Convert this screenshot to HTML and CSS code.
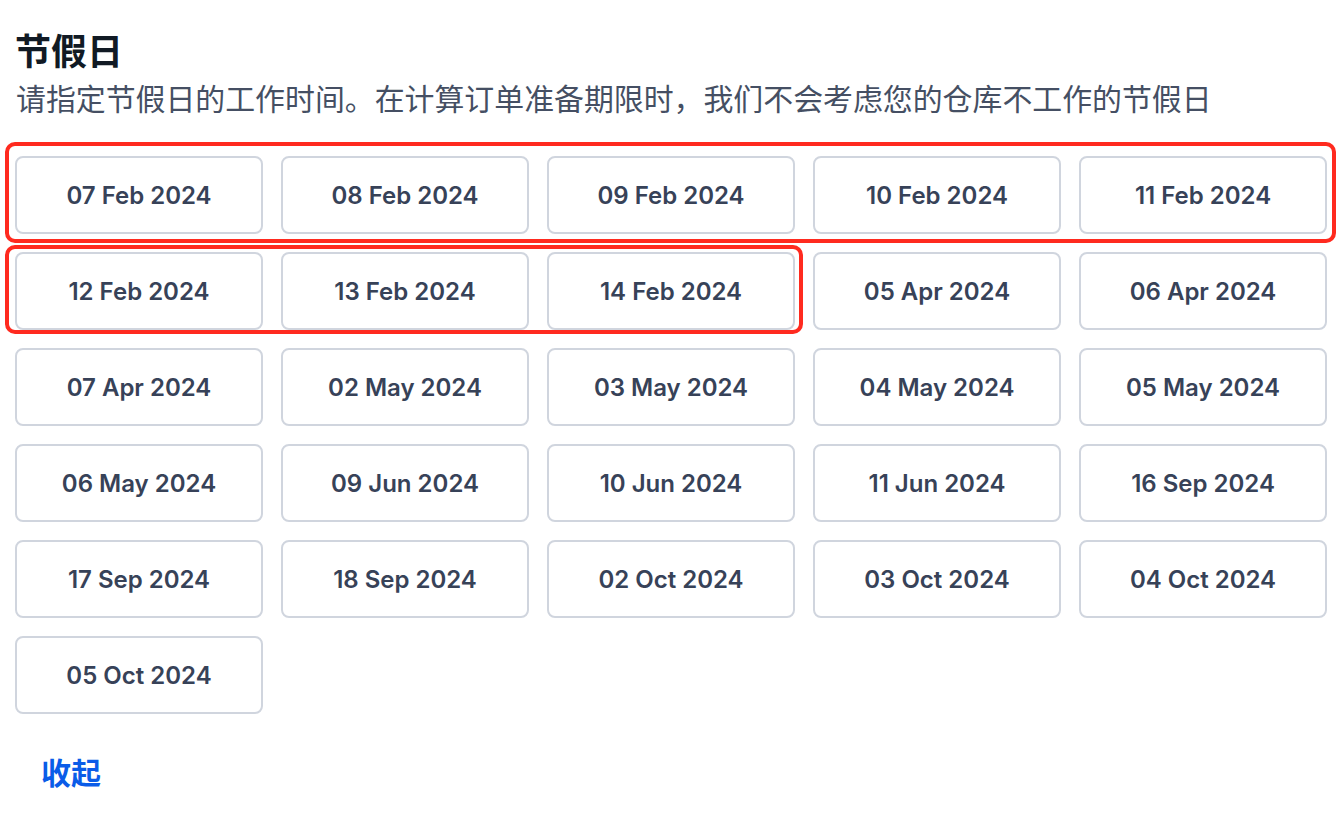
FILE: index.html
```html
<!DOCTYPE html>
<html lang="zh">
<head>
    <meta charset="UTF-8">
    <meta name="viewport" content="width=device-width, initial-scale=1.0">
    <title>节假日</title>
    <link rel="stylesheet" href="styles.css">
</head>
<body>
    <div class="holidays">
        <h1 class="holidays-title">节假日</h1>
        <p class="holidays-subtitle">请指定节假日的工作时间。在计算订单准备期限时，我们不会考虑您的仓库不工作的节假日</p>

        <div class="holiday-grid">
            <button class="holiday-button">07 Feb 2024</button>
            <button class="holiday-button">08 Feb 2024</button>
            <button class="holiday-button">09 Feb 2024</button>
            <button class="holiday-button">10 Feb 2024</button>
            <button class="holiday-button">11 Feb 2024</button>
            <button class="holiday-button">12 Feb 2024</button>
            <button class="holiday-button">13 Feb 2024</button>
            <button class="holiday-button">14 Feb 2024</button>
            <button class="holiday-button">05 Apr 2024</button>
            <button class="holiday-button">06 Apr 2024</button>
            <button class="holiday-button">07 Apr 2024</button>
            <button class="holiday-button">02 May 2024</button>
            <button class="holiday-button">03 May 2024</button>
            <button class="holiday-button">04 May 2024</button>
            <button class="holiday-button">05 May 2024</button>
            <button class="holiday-button">06 May 2024</button>
            <button class="holiday-button">09 Jun 2024</button>
            <button class="holiday-button">10 Jun 2024</button>
            <button class="holiday-button">11 Jun 2024</button>
            <button class="holiday-button">16 Sep 2024</button>
            <button class="holiday-button">17 Sep 2024</button>
            <button class="holiday-button">18 Sep 2024</button>
            <button class="holiday-button">02 Oct 2024</button>
            <button class="holiday-button">03 Oct 2024</button>
            <button class="holiday-button">04 Oct 2024</button>
            <button class="holiday-button">05 Oct 2024</button>

            <!-- highlight marks -->
            <div class="highlight highlight-row-one"></div>
            <div class="highlight highlight-row-two"></div>
        </div>

        <button class="collapse-button">收起</button>
    </div>
</body>
</html>
```

FILE: styles.css
```css
body {
    margin: 0;
    padding: 0;
    background-color: #ffffff;
    font-family: Inter, "Noto Sans CJK SC", sans-serif;
}

.holidays {
    padding: 28px 17px 0 15px;
}

.holidays-title {
    margin: 0;
    font-size: 36px;
    line-height: 48px;
    font-weight: 700;
    color: #111a24;
}

.holidays-subtitle {
    margin: 0 0 0 1px;
    font-size: 29.9px;
    line-height: 46px;
    color: #454f63;
    white-space: nowrap;
}

.holiday-grid {
    position: relative;
    display: grid;
    grid-template-columns: repeat(5, 248px);
    column-gap: 18px;
    row-gap: 18px;
    margin-top: 34px;
}

.holiday-button {
    height: 78px;
    background-color: #ffffff;
    border: 2px solid #d0d5de;
    border-radius: 8px;
    font-family: Inter, sans-serif;
    font-size: 24px;
    font-weight: 600;
    color: #374258;
    cursor: pointer;
}

.highlight {
    position: absolute;
    border: 4px solid #ff2a1f;
    border-radius: 10px;
    pointer-events: none;
}

.highlight-row-one {
    left: -10px;
    top: -14px;
    width: 1323px;
    height: 93px;
}

.highlight-row-two {
    left: -10px;
    top: 89px;
    width: 790px;
    height: 81px;
}

.collapse-button {
    margin-top: 27px;
    padding: 8px 26px;
    background: none;
    border: none;
    font-family: Inter, "Noto Sans CJK SC", sans-serif;
    font-size: 30px;
    font-weight: 700;
    color: #0a5ce8;
    cursor: pointer;
}
```
